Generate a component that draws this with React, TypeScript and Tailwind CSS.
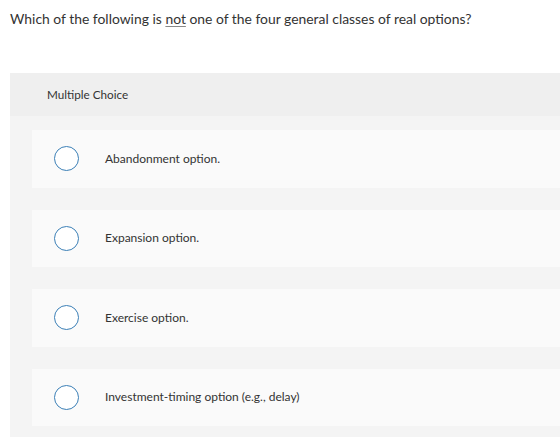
const choices = [
  "Abandonment option.",
  "Expansion option.",
  "Exercise option.",
  "Investment-timing option (e.g., delay)",
];

function Radio() {
  return (
    <span className="block w-[25px] h-[25px] shrink-0 rounded-full border-[1.5px] border-[#3b7fb6] bg-white" />
  );
}

export default function App() {
  return (
    <div
      className="w-[560px] h-[437px] overflow-hidden bg-white text-[#333]"
      style={{ fontFamily: "Lato, 'Open Sans', sans-serif" }}
    >
      <p className="pl-[10px] pt-[10px] text-[13.9px] leading-[17px]">
        Which of the following is{" "}
        <span className="underline decoration-[#888] underline-offset-2">not</span>{" "}
        one of the four general classes of real options?
      </p>

      <div className="ml-[10px] mt-[46px] bg-[#f4f4f4] pb-[24px]">
        <div className="h-[43px] bg-[#efefef] pl-[37px] flex items-center text-[11.7px] pt-[1px]">
          Multiple Choice
        </div>
        <div className="flex flex-col gap-[22px] pt-[14px] pl-[22px]">
          {choices.map((c) => (
            <div
              key={c}
              className="h-[57.5px] bg-[#fafafa] flex items-center pl-[22px]"
            >
              <Radio />
              <span className="ml-[26px] text-[12px]">{c}</span>
            </div>
          ))}
        </div>
      </div>
    </div>
  );
}
